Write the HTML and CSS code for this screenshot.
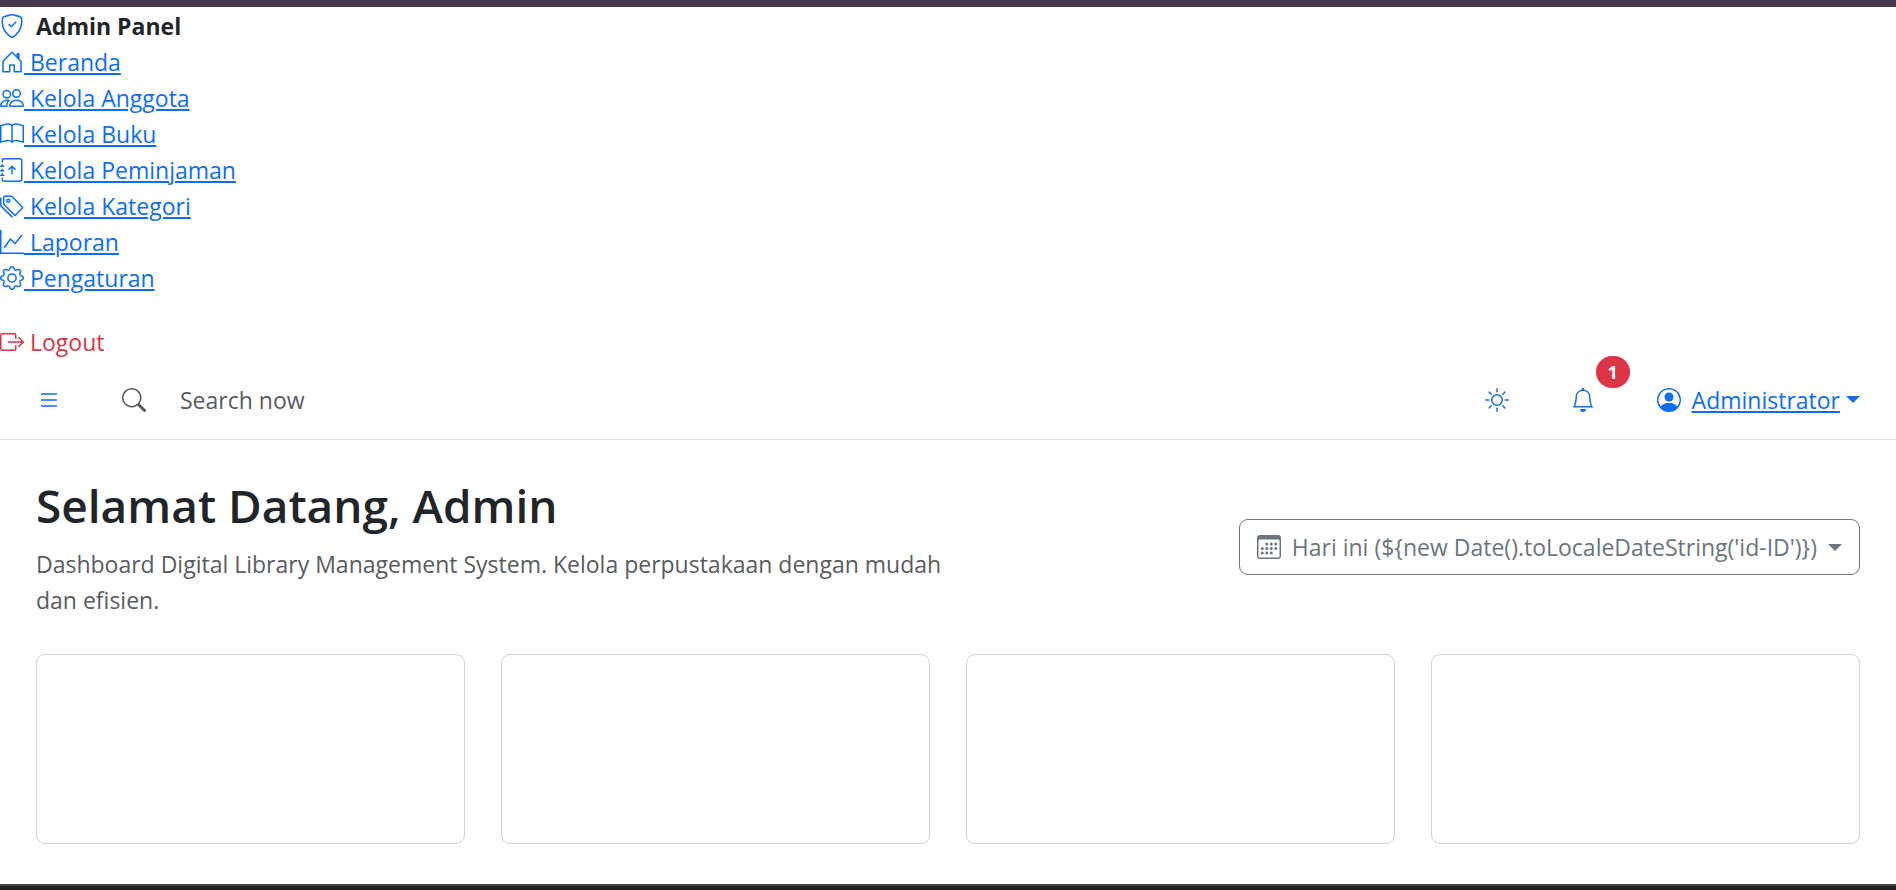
FILE: index.html
```html
<!DOCTYPE html>
<html lang="id">
<head>
<meta charset="utf-8">
<meta name="viewport" content="width=device-width, initial-scale=1">
<title>Admin Panel</title>
<link rel="stylesheet" href="styles.css">
</head>
<body>
<svg class="sprite" aria-hidden="true">
  <symbol id="shield" viewBox="0 0 16 16"><path d="M5.338 1.59a61 61 0 0 0-2.837.856.48.48 0 0 0-.328.39c-.554 4.157.726 7.19 2.253 9.188a10.7 10.7 0 0 0 2.287 2.233c.346.244.652.42.893.533q.18.085.293.118a1 1 0 0 0 .101.025 1 1 0 0 0 .1-.025q.114-.034.294-.118c.24-.113.547-.29.893-.533a10.7 10.7 0 0 0 2.287-2.233c1.527-1.997 2.807-5.031 2.253-9.188a.48.48 0 0 0-.328-.39c-.651-.213-1.75-.56-2.837-.855C9.552 1.29 8.531 1.067 8 1.067c-.53 0-1.552.223-2.662.524zM5.072.56C6.157.265 7.31 0 8 0s1.843.265 2.928.56c1.11.3 2.229.655 2.887.87a1.54 1.54 0 0 1 1.044 1.262c.596 4.477-.787 7.795-2.465 9.99a11.8 11.8 0 0 1-2.517 2.453 7 7 0 0 1-1.048.625c-.28.132-.581.24-.829.24s-.548-.108-.829-.24a7 7 0 0 1-1.048-.625 11.8 11.8 0 0 1-2.517-2.453C1.928 10.487.545 7.169 1.141 2.692A1.54 1.54 0 0 1 2.185 1.43 63 63 0 0 1 5.072.56"/><path d="M10.854 5.146a.5.5 0 0 1 0 .708l-3 3a.5.5 0 0 1-.708 0l-1.5-1.5a.5.5 0 1 1 .708-.708L7.5 7.793l2.646-2.647a.5.5 0 0 1 .708 0"/></symbol>
  <symbol id="house" viewBox="0 0 16 16"><path d="M8.354 1.146a.5.5 0 0 0-.708 0l-6 6A.5.5 0 0 0 1.5 7.5v7a.5.5 0 0 0 .5.5h4.5a.5.5 0 0 0 .5-.5v-4h2v4a.5.5 0 0 0 .5.5H14a.5.5 0 0 0 .5-.5v-7a.5.5 0 0 0-.146-.354L13 5.793V2.5a.5.5 0 0 0-.5-.5h-1a.5.5 0 0 0-.5.5v1.293zM2.5 14V7.707l5.5-5.5 5.5 5.5V14H10v-4a.5.5 0 0 0-.5-.5h-3a.5.5 0 0 0-.5.5v4z"/></symbol>
  <symbol id="people" viewBox="0 0 16 16"><path d="M15 14s1 0 1-1-1-4-5-4-5 3-5 4 1 1 1 1zm-7.978-1L7 12.996c.001-.264.167-1.03.76-1.72C8.312 10.629 9.282 10 11 10c1.717 0 2.687.63 3.24 1.276.593.69.758 1.457.76 1.72l-.008.002-.014.002zM11 7a2 2 0 1 0 0-4 2 2 0 0 0 0 4m3-2a3 3 0 1 1-6 0 3 3 0 0 1 6 0M6.936 9.28a6 6 0 0 0-1.23-.247A7 7 0 0 0 5 9c-4 0-5 3-5 4q0 1 1 1h4.216A2.24 2.24 0 0 1 5 13c0-1.01.377-2.042 1.09-2.904.243-.294.526-.569.846-.816M4.92 10A5.5 5.5 0 0 0 4 13H1c0-.26.164-1.03.76-1.724.545-.636 1.492-1.256 3.16-1.275ZM1.5 5.5a3 3 0 1 1 6 0 3 3 0 0 1-6 0m3-2a2 2 0 1 0 0 4 2 2 0 0 0 0-4"/></symbol>
  <symbol id="book" viewBox="0 0 16 16"><path d="M1 2.828c.885-.37 2.154-.769 3.388-.893 1.33-.134 2.458.063 3.112.752v9.746c-.935-.53-2.12-.603-3.213-.493-1.18.12-2.37.461-3.287.811zm7.5-.141c.654-.689 1.782-.886 3.112-.752 1.234.124 2.503.523 3.388.893v9.923c-.918-.35-2.107-.692-3.287-.81-1.094-.111-2.278-.039-3.213.492zM8 1.783C7.015.936 5.587.81 4.287.94c-1.514.153-3.042.672-3.994 1.105A.5.5 0 0 0 0 2.5v11a.5.5 0 0 0 .707.455c.882-.4 2.303-.881 3.68-1.02 1.409-.142 2.59.087 3.223.877a.5.5 0 0 0 .78 0c.633-.79 1.814-1.019 3.222-.877 1.378.139 2.8.62 3.681 1.02A.5.5 0 0 0 16 13.5v-11a.5.5 0 0 0-.293-.455c-.952-.433-2.48-.952-3.994-1.105C10.413.809 8.985.936 8 1.783"/></symbol>
  <symbol id="journal" viewBox="0 0 16 16"><path d="M8 11a.5.5 0 0 0 .5-.5V6.707l1.146 1.147a.5.5 0 0 0 .708-.708l-2-2a.5.5 0 0 0-.708 0l-2 2a.5.5 0 1 0 .708.708L7.5 6.707V10.5a.5.5 0 0 0 .5.5"/><path d="M3 0h10a2 2 0 0 1 2 2v12a2 2 0 0 1-2 2H3a2 2 0 0 1-2-2v-1h1v1a1 1 0 0 0 1 1h10a1 1 0 0 0 1-1V2a1 1 0 0 0-1-1H3a1 1 0 0 0-1 1v1H1V2a2 2 0 0 1 2-2"/><path d="M1 5v-.5a.5.5 0 0 1 1 0V5h.5a.5.5 0 0 1 0 1h-2a.5.5 0 0 1 0-1zm0 3v-.5a.5.5 0 0 1 1 0V8h.5a.5.5 0 0 1 0 1h-2a.5.5 0 0 1 0-1zm0 3v-.5a.5.5 0 0 1 1 0v.5h.5a.5.5 0 0 1 0 1h-2a.5.5 0 0 1 0-1z"/></symbol>
  <symbol id="tags" viewBox="0 0 16 16"><path d="M3 2v4.586l7 7L14.586 9l-7-7zM2 2a1 1 0 0 1 1-1h4.586a1 1 0 0 1 .707.293l7 7a1 1 0 0 1 0 1.414l-4.586 4.586a1 1 0 0 1-1.414 0l-7-7A1 1 0 0 1 2 6.586z"/><path d="M5.5 5a.5.5 0 1 1 0-1 .5.5 0 0 1 0 1m0 1a1.5 1.5 0 1 0 0-3 1.5 1.5 0 0 0 0 3M1 7.086a1 1 0 0 0 .293.707L8.75 15.25l-.043.043a1 1 0 0 1-1.414 0l-7-7A1 1 0 0 1 0 7.586V3a1 1 0 0 1 1-1z"/></symbol>
  <symbol id="graph" viewBox="0 0 16 16"><path d="M0 0h1v15h15v1H0zm14.817 3.113a.5.5 0 0 1 .07.704l-4.5 5.5a.5.5 0 0 1-.74.037L7.06 6.767l-3.656 5.027a.5.5 0 0 1-.808-.588l4-5.5a.5.5 0 0 1 .758-.06l2.609 2.61 4.15-5.073a.5.5 0 0 1 .704-.07"/></symbol>
  <symbol id="gear" viewBox="0 0 16 16"><path d="M8 4.754a3.246 3.246 0 1 0 0 6.492 3.246 3.246 0 0 0 0-6.492M5.754 8a2.246 2.246 0 1 1 4.492 0 2.246 2.246 0 0 1-4.492 0"/><path d="M9.796 1.343c-.527-1.79-3.065-1.79-3.592 0l-.094.319a.873.873 0 0 1-1.255.52l-.292-.16c-1.64-.892-3.433.902-2.54 2.541l.159.292a.873.873 0 0 1-.52 1.255l-.319.094c-1.79.527-1.79 3.065 0 3.592l.319.094a.873.873 0 0 1 .52 1.255l-.16.292c-.892 1.64.901 3.434 2.541 2.54l.292-.159a.873.873 0 0 1 1.255.52l.094.319c.527 1.79 3.065 1.79 3.592 0l.094-.319a.873.873 0 0 1 1.255-.52l.292.16c1.64.893 3.434-.902 2.54-2.541l-.159-.292a.873.873 0 0 1 .52-1.255l.319-.094c1.79-.527 1.79-3.065 0-3.592l-.319-.094a.873.873 0 0 1-.52-1.255l.16-.292c.893-1.64-.902-3.433-2.541-2.54l-.292.159a.873.873 0 0 1-1.255-.52zm-2.633.283c.246-.835 1.428-.835 1.674 0l.094.319a1.873 1.873 0 0 0 2.693 1.115l.291-.16c.764-.415 1.6.42 1.184 1.185l-.159.292a1.873 1.873 0 0 0 1.116 2.692l.318.094c.835.246.835 1.428 0 1.674l-.319.094a1.873 1.873 0 0 0-1.115 2.693l.16.291c.415.764-.42 1.6-1.185 1.184l-.291-.159a1.873 1.873 0 0 0-2.693 1.116l-.094.318c-.246.835-1.428.835-1.674 0l-.094-.319a1.873 1.873 0 0 0-2.692-1.115l-.292.16c-.764.415-1.6-.42-1.184-1.185l.159-.291A1.873 1.873 0 0 0 1.945 8.93l-.319-.094c-.835-.246-.835-1.428 0-1.674l.319-.094A1.873 1.873 0 0 0 3.06 4.377l-.16-.292c-.415-.764.42-1.6 1.185-1.184l.292.159a1.873 1.873 0 0 0 2.692-1.115z"/></symbol>
  <symbol id="exit" viewBox="0 0 16 16"><path d="M10 12.5a.5.5 0 0 1-.5.5h-8a.5.5 0 0 1-.5-.5v-9a.5.5 0 0 1 .5-.5h8a.5.5 0 0 1 .5.5v2a.5.5 0 0 0 1 0v-2A1.5 1.5 0 0 0 9.5 2h-8A1.5 1.5 0 0 0 0 3.5v9A1.5 1.5 0 0 0 1.5 14h8a1.5 1.5 0 0 0 1.5-1.5v-2a.5.5 0 0 0-1 0z"/><path d="M15.854 8.354a.5.5 0 0 0 0-.708l-3-3a.5.5 0 0 0-.708.708L14.293 7.5H5.5a.5.5 0 0 0 0 1h8.793l-2.147 2.146a.5.5 0 0 0 .708.708z"/></symbol>
  <symbol id="list" viewBox="0 0 16 16"><path d="M2.5 12a.5.5 0 0 1 .5-.5h10a.5.5 0 0 1 0 1H3a.5.5 0 0 1-.5-.5m0-4a.5.5 0 0 1 .5-.5h10a.5.5 0 0 1 0 1H3a.5.5 0 0 1-.5-.5m0-4a.5.5 0 0 1 .5-.5h10a.5.5 0 0 1 0 1H3a.5.5 0 0 1-.5-.5"/></symbol>
  <symbol id="search-icon" viewBox="0 0 16 16"><path d="M11.742 10.344a6.5 6.5 0 1 0-1.397 1.398h-.001q.044.06.098.115l3.85 3.85a1 1 0 0 0 1.415-1.414l-3.85-3.85a1 1 0 0 0-.115-.1zM12 6.5a5.5 5.5 0 1 1-11 0 5.5 5.5 0 0 1 11 0"/></symbol>
  <symbol id="sun" viewBox="0 0 16 16"><path d="M8 11a3 3 0 1 1 0-6 3 3 0 0 1 0 6m0 1a4 4 0 1 0 0-8 4 4 0 0 0 0 8M8 0a.5.5 0 0 1 .5.5v2a.5.5 0 0 1-1 0v-2A.5.5 0 0 1 8 0m0 13a.5.5 0 0 1 .5.5v2a.5.5 0 0 1-1 0v-2A.5.5 0 0 1 8 13m8-5a.5.5 0 0 1-.5.5h-2a.5.5 0 0 1 0-1h2a.5.5 0 0 1 .5.5M3 8a.5.5 0 0 1-.5.5h-2a.5.5 0 0 1 0-1h2A.5.5 0 0 1 3 8m10.657-5.657a.5.5 0 0 1 0 .707l-1.414 1.415a.5.5 0 1 1-.707-.708l1.414-1.414a.5.5 0 0 1 .707 0m-9.193 9.193a.5.5 0 0 1 0 .707L3.05 13.657a.5.5 0 0 1-.707-.707l1.414-1.414a.5.5 0 0 1 .707 0m9.193 2.121a.5.5 0 0 1-.707 0l-1.414-1.414a.5.5 0 0 1 .707-.707l1.414 1.414a.5.5 0 0 1 0 .707M4.464 4.465a.5.5 0 0 1-.707 0L2.343 3.05a.5.5 0 1 1 .707-.707l1.414 1.414a.5.5 0 0 1 0 .708"/></symbol>
  <symbol id="bell" viewBox="0 0 16 16"><path d="M8 16a2 2 0 0 0 2-2H6a2 2 0 0 0 2 2M8 1.918l-.797.161A4 4 0 0 0 4 6c0 .628-.134 2.197-.459 3.742-.16.767-.376 1.566-.663 2.258h10.244c-.287-.692-.502-1.49-.663-2.258C12.134 8.197 12 6.628 12 6a4 4 0 0 0-3.203-3.92zM14.22 12c.223.447.481.801.78 1H1c.299-.199.557-.553.78-1C2.68 10.2 3 6.88 3 6c0-2.42 1.72-4.44 4.005-4.901a1 1 0 1 1 1.99 0A5 5 0 0 1 13 6c0 .88.32 4.2 1.22 6"/></symbol>
  <symbol id="person" viewBox="0 0 16 16"><path d="M11 6a3 3 0 1 1-6 0 3 3 0 0 1 6 0"/><path fill-rule="evenodd" d="M0 8a8 8 0 1 1 16 0A8 8 0 0 1 0 8m8-7a7 7 0 0 0-5.468 11.37C3.242 11.226 4.805 10 8 10s4.757 1.225 5.468 2.37A7 7 0 0 0 8 1"/></symbol>
  <symbol id="calendar" viewBox="0 0 16 16"><path d="M14 0H2a2 2 0 0 0-2 2v12a2 2 0 0 0 2 2h12a2 2 0 0 0 2-2V2a2 2 0 0 0-2-2M1 3.857C1 3.384 1.448 3 2 3h12c.552 0 1 .384 1 .857v10.286c0 .473-.448.857-1 .857H2c-.552 0-1-.384-1-.857z"/><path d="M6.5 7a1 1 0 1 0 0-2 1 1 0 0 0 0 2m3 0a1 1 0 1 0 0-2 1 1 0 0 0 0 2m3 0a1 1 0 1 0 0-2 1 1 0 0 0 0 2m-9 3a1 1 0 1 0 0-2 1 1 0 0 0 0 2m3 0a1 1 0 1 0 0-2 1 1 0 0 0 0 2m3 0a1 1 0 1 0 0-2 1 1 0 0 0 0 2m3 0a1 1 0 1 0 0-2 1 1 0 0 0 0 2m-9 3a1 1 0 1 0 0-2 1 1 0 0 0 0 2m3 0a1 1 0 1 0 0-2 1 1 0 0 0 0 2m3 0a1 1 0 1 0 0-2 1 1 0 0 0 0 2"/></symbol>
</svg>

<aside class="sidebar">
  <div class="brand"><svg class="icon"><use href="#shield"/></svg><strong>Admin Panel</strong></div>
  <nav class="menu">
    <a href="#beranda"><svg class="icon"><use href="#house"/></svg> Beranda</a>
    <a href="#anggota"><svg class="icon"><use href="#people"/></svg> Kelola Anggota</a>
    <a href="#buku"><svg class="icon"><use href="#book"/></svg> Kelola Buku</a>
    <a href="#peminjaman"><svg class="icon"><use href="#journal"/></svg> Kelola Peminjaman</a>
    <a href="#kategori"><svg class="icon"><use href="#tags"/></svg> Kelola Kategori</a>
    <a href="#laporan"><svg class="icon"><use href="#graph"/></svg> Laporan</a>
    <a href="#pengaturan"><svg class="icon"><use href="#gear"/></svg> Pengaturan</a>
  </nav>
  <a class="logout" href="#logout"><svg class="icon"><use href="#exit"/></svg> Logout</a>
</aside>

<header class="topbar">
  <button class="icon-button" type="button" aria-label="Menu"><svg class="icon"><use href="#list"/></svg></button>
  <div class="search">
    <label class="search-label" for="search" aria-label="Search"><svg class="icon"><use href="#search-icon"/></svg></label>
    <input class="search-input" id="search" type="search" placeholder="Search now">
  </div>
  <div class="actions">
    <button class="icon-button" type="button" aria-label="Tema"><svg class="icon"><use href="#sun"/></svg></button>
    <button class="icon-button" type="button" aria-label="Notifikasi"><svg class="icon"><use href="#bell"/></svg><span class="badge">1</span></button>
    <a class="account" href="#akun"><svg class="icon"><use href="#person"/></svg><span class="account-name">Administrator</span><span class="caret"></span></a>
  </div>
</header>

<main class="content">
  <section class="intro">
    <div>
      <h1 class="title">Selamat Datang, Admin</h1>
      <p class="lead">Dashboard Digital Library Management System. Kelola perpustakaan dengan mudah dan efisien.</p>
    </div>
    <button class="date-button" type="button"><svg class="icon"><use href="#calendar"/></svg><span>Hari ini (${new Date().toLocaleDateString('id-ID')})</span><span class="caret"></span></button>
  </section>
  <section class="cards">
    <div class="card"></div>
    <div class="card"></div>
    <div class="card"></div>
    <div class="card"></div>
  </section>
</main>
<footer class="bottom-bar"></footer>
</body>
</html>
```
FILE: styles.css
```css
* { box-sizing: border-box; }

body {
  display: flex;
  flex-direction: column;
  min-height: 100vh;
  margin: 0;
  padding-top: 1px;
  border-top: 7px solid #43384a;
  background: #fff;
  color: #212529;
  font: 23px/36px "Open Sans", "Noto Sans", sans-serif;
}

button, input { font: inherit; }

.sprite { display: none; }

.icon {
  width: 24px;
  height: 24px;
  flex: none;
  fill: currentColor;
  vertical-align: -3px;
}

.sidebar {
  display: flex;
  flex-direction: column;
}

.brand {
  display: flex;
  align-items: center;
  gap: 12px;
}

.brand .icon { color: #0d6efd; }

.menu {
  display: flex;
  flex-direction: column;
  align-items: flex-start;
}

.menu a {
  color: #0d6efd;
  text-underline-offset: 2px;
  text-decoration-thickness: 2px;
}

.logout {
  align-self: flex-start;
  margin-top: 28px;
  color: #dc3545;
  text-decoration: none;
}

.topbar {
  display: flex;
  align-items: center;
  gap: 61px;
  padding: 20px 36px 20px 37px;
  border-bottom: 1px solid #dee2e6;
}

.icon-button {
  position: relative;
  display: flex;
  padding: 0;
  border: 0;
  background: none;
  color: #0d6efd;
}

.search {
  display: flex;
  flex: 1;
  align-items: center;
  gap: 34px;
}

.search-label {
  display: flex;
  color: #595c5f;
}

.search-input {
  flex: 1;
  min-width: 0;
  height: 39px;
  padding: 0;
  border: 0;
  background: none;
  outline: 0;
}

.search-input::placeholder {
  color: #595c5f;
  opacity: 1;
}

.actions {
  display: flex;
  align-items: center;
  gap: 62px;
}

.badge {
  position: absolute;
  left: 25px;
  bottom: 24px;
  padding: 0 12px;
  border-radius: 16px;
  background: #dc3545;
  color: #fff;
  font-size: 18px;
  font-weight: 700;
  line-height: 32px;
}

.account {
  display: flex;
  align-items: center;
  color: #0d6efd;
  text-decoration: none;
}

.account-name {
  margin: 0 6px 0 11px;
  text-decoration: underline 2px;
  text-underline-offset: 2px;
}

.caret {
  border: 7px solid transparent;
  border-top-color: currentColor;
  border-bottom: 0;
}

.content {
  display: flex;
  flex-direction: column;
  gap: 36px;
  padding: 36px;
}

.intro {
  display: grid;
  grid-template-columns: 1fr 1fr;
  align-items: center;
}

.title {
  margin: 0 0 12px;
  font-size: 46px;
  font-weight: 600;
  line-height: 58px;
}

.lead {
  margin: 0;
  color: #595c5f;
}

.date-button {
  display: flex;
  align-items: center;
  justify-self: end;
  gap: 11px;
  padding: 9px 17px;
  border: 1px solid #6c757d;
  border-radius: 9px;
  background: none;
  color: #6c757d;
  white-space: nowrap;
}

.cards {
  display: grid;
  grid-template-columns: repeat(4, 1fr);
  gap: 36px;
}

.card {
  min-height: 190px;
  border: 1px solid #d0d1d2;
  border-radius: 9px;
}

.bottom-bar {
  height: 6px;
  margin-top: auto;
  border-top: 2px solid #444;
  background: #202020;
}
```
